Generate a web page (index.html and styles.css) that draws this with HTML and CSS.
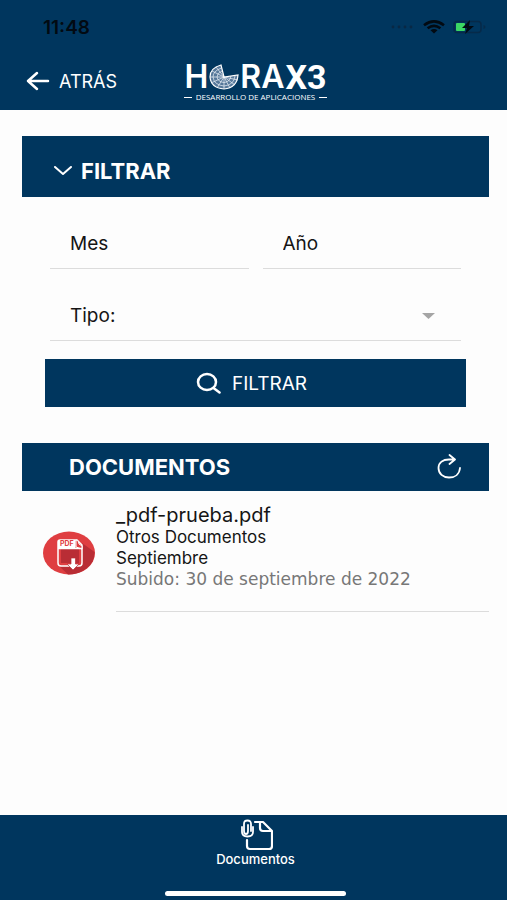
FILE: index.html
```html
<!DOCTYPE html>
<html lang="es">
<head>
<meta charset="utf-8">
<meta name="viewport" content="width=device-width, initial-scale=1">
<title>Documentos</title>
<link rel="stylesheet" href="styles.css">
</head>
<body>
<header class="header">
  <div class="status">
    <time class="clock">11:48</time>
    <div class="indicators">
      <svg width="24" height="4" viewBox="0 0 24 4" fill="#082844" aria-hidden="true"><circle cx="2" cy="2" r="1.4"/><circle cx="8" cy="2" r="1.4"/><circle cx="14" cy="2" r="1.4"/><circle cx="20" cy="2" r="1.4"/></svg>
      <svg width="22" height="14" viewBox="0 0 22 14" fill="none" stroke="#020a12" stroke-width="2.6" aria-hidden="true"><path d="M1 5.200Q11-2.500 21 5.200M4.600 8.300Q11 3.400 17.400 8.300"/><path d="M7.500 10.300Q11 7.700 14.500 10.300L11 13.500Z" fill="#020a12" stroke="none"/></svg>
      <svg width="34" height="14" viewBox="0 0 34 14" aria-hidden="true"><rect x="1" y="1.500" width="27" height="11" rx="3" fill="none" stroke="#062a49" stroke-width="1.500"/><path d="M30.500 5v4q2-.5 2-2t-2-2" fill="#062a49"/><rect x="3" y="3" width="9" height="8" rx="1" fill="#3bd764"/><path d="M17 0 9 8h5L12 14 21 6h-5z" fill="#020a12"/></svg>
    </div>
  </div>
  <div class="navbar">
    <a class="back" href="#">
      <svg width="24" height="20" viewBox="0 0 24 20" fill="none" stroke="#fff" stroke-width="2.500" stroke-linecap="round" stroke-linejoin="round" aria-hidden="true"><path d="M11 2 2 10l9 8M2 10h20"/></svg>
      <span>ATRÁS</span>
    </a>
    <div class="brand">
      <div class="brand-name">
        <span>H</span>
        <svg width="30" height="26" viewBox="0 0 30 26" aria-hidden="true">
          <path d="M15 13 12 1Q1 4 1 13 2 24 15 25 28 24 29 11Z" fill="#56789a"/>
          <g fill="none" stroke="#eef4f9" stroke-width=".7"><path d="M15 13H1M15 13v12M15 13 3 7M15 13 7 3M15 13 2 19M15 13 8 24M15 13l6 11M15 13l11 8M15 13l14 3M12.500 4Q4 7 4 13 5 21 15 22 25 21 26 12M13 7Q8 9 8 13 9 18 15 18.500 21 18 22 12"/></g>
          <path d="M15 13 12 1Q1 4 1 13 2 24 15 25 28 24 29 11Z" fill="none" stroke="#fff" stroke-width="1.200"/>
        </svg>
        <span>RA</span><strong>X3</strong>
      </div>
      <div class="tagline">DESARROLLO DE APLICACIONES</div>
    </div>
  </div>
</header>

<main class="content">
  <section>
    <h2 class="bar bar-filter">
      <button class="toggle" type="button" aria-expanded="true" aria-controls="filters">
        <svg width="18" height="10" viewBox="0 0 18 10" fill="none" stroke="#fff" stroke-width="2" stroke-linecap="round" stroke-linejoin="round" aria-hidden="true"><path d="m1 1 8 7 8-7"/></svg>
        <span>FILTRAR</span>
      </button>
    </h2>
    <form class="filters" id="filters">
      <div class="fields">
        <input class="field" type="text" aria-label="Mes" placeholder="Mes">
        <input class="field" type="text" aria-label="Año" placeholder="Año">
        <div class="field field-type">
          <label for="type">Tipo:</label>
          <select id="type"><option></option></select>
          <svg width="13" height="6" viewBox="0 0 13 6" fill="#a5a5a5" aria-hidden="true"><path d="M0 0h13L6.500 6z"/></svg>
        </div>
      </div>
      <button class="submit" type="submit">
        <svg width="26" height="22" viewBox="0 0 26 22" fill="none" stroke="#fff" stroke-width="2.500" stroke-linecap="round" aria-hidden="true"><ellipse cx="11" cy="10" rx="9" ry="8"/><path d="m17.500 16 6 4.500"/></svg>
        <span>FILTRAR</span>
      </button>
    </form>
  </section>

  <section>
    <div class="bar bar-documents">
      <h2>DOCUMENTOS</h2>
      <button class="refresh" type="button" aria-label="Actualizar">
        <svg width="26" height="26" viewBox="0 0 26 26" fill="none" stroke="#fff" stroke-width="1.800" stroke-linecap="round" stroke-linejoin="round" aria-hidden="true"><path d="M24 14C23.500 20 19 23.500 13 23.500 7 23.500 2.500 19.500 2.500 14S7 5.500 13 5.500h5.500M13.500 1l5.500 4.500-5.500 4.500"/></svg>
      </button>
    </div>
    <ul class="list">
      <li class="document">
        <svg class="pdf" width="54" height="44" viewBox="0 0 54 44" role="img" aria-label="PDF">
          <ellipse cx="27" cy="22" rx="26" ry="21.500" fill="#df3e41"/>
          <path d="m40 12 12.500 9Q53 32 43 38.500 36 43.500 26 43.500L17 35 39 34z" fill="#b92d35"/>
          <path d="M18 9h17l5 5v18q0 3-3 3H19q-3 0-3-3V11q0-2 2-2" fill="#df3e41" stroke="#fff" stroke-width="1.500"/>
          <path d="M19 18h18v14H19z" fill="#b92d35"/>
          <path d="M16 9h17.500v8H16z" fill="#fff"/>
          <path d="M34 9q3 0 3 4l3 2v3l-6-2z" fill="#df3e41" stroke="#fff"/>
          <path d="M16 17.500h24" stroke="#fff" stroke-width="1.500"/>
          <text class="pdf-text" x="18" y="15">PDF</text>
          <path d="M29 27h4.500v6H37l-6 6-6-6h4z" fill="#fff" stroke="#b92d35" stroke-width=".7"/>
        </svg>
        <div class="details">
          <h3>_pdf-prueba.pdf</h3>
          <p>Otros Documentos</p>
          <p>Septiembre</p>
          <p class="date">Subido: 30 de septiembre de 2022</p>
        </div>
      </li>
    </ul>
  </section>
</main>

<footer class="footer">
  <nav>
    <a class="tab" href="#" aria-current="page">
      <svg width="34" height="32" viewBox="0 0 34 32" fill="none" stroke="#fff" stroke-linecap="round" stroke-linejoin="round" aria-hidden="true"><path d="M16 3h8l9 9v15q0 3-3 3H11q-3 0-3-3v-6M21 4v5q0 3 3 3h8" stroke-width="2.200"/><path d="M14 8v5q0 4.500-5.500 4.500T3 13V8M12 12V5q0-3.500-3.500-3.500T5 5v7q0 3 2 3t2-3V6" stroke-width="1.800"/></svg>
      <span>Documentos</span>
    </a>
  </nav>
  <div class="home-bar"></div>
</footer>
</body>
</html>
```

FILE: styles.css
```css
* { box-sizing: border-box; }

body {
  margin: 0;
  min-height: 100vh;
  display: flex;
  flex-direction: column;
  background: #fdfdfd;
  color: #151515;
  font-family: Inter, "Liberation Sans", sans-serif;
  font-size: 19px;
}

h2, h3, p, ul { margin: 0; padding: 0; }
button, input, select { font: inherit; color: inherit; border: 0; border-radius: 0; background: none; padding: 0; }
svg { display: block; flex: none; }
a { color: inherit; text-decoration: none; }

.header, .footer, .bar, .submit { background: #00365e; color: #fff; }

.header { height: 110px; }

.status {
  height: 52px;
  padding: 2px 20px 0 43px;
  display: flex;
  align-items: center;
  justify-content: space-between;
}

.clock { color: #020a12; font-size: 19px; font-weight: 600; }
.indicators { display: flex; align-items: center; gap: 8px; }

.navbar {
  height: 58px;
  padding: 0 26px;
  display: grid;
  grid-template-columns: 1fr auto 1fr;
  align-items: center;
}

.back { display: flex; align-items: center; gap: 9px; font-size: 18px; }

.brand { padding: 2px 0 0 4px; }

.brand-name {
  display: flex;
  align-items: center;
  justify-content: center;
  gap: 1px;
  font: 600 32px/30px Inter, sans-serif;
}

.brand-name strong { font: 700 34px/30px Roboto, sans-serif; }

.tagline {
  display: flex;
  align-items: center;
  justify-content: center;
  gap: 4px;
  font: 8px/10px "Open Sans", sans-serif;
}

.tagline::before, .tagline::after {
  content: "";
  width: 8px;
  height: 1px;
  background: #fff;
}

.content { flex: 1; padding: 26px 18px 24px 22px; }

.bar {
  display: flex;
  align-items: center;
  font-size: 22px;
  font-weight: 700;
}

.bar h2 { font: inherit; }
.bar-filter { height: 61px; padding: 8px 32px 0; }
.toggle { display: flex; align-items: center; gap: 9px; }

.filters { padding: 11px 23px 36px; }

.fields {
  display: grid;
  grid-template-columns: 1fr 1fr;
  column-gap: 14px;
  padding: 0 5px;
}

.field {
  height: 61px;
  min-width: 0;
  width: 100%;
  padding: 10px 21px 0 20px;
  border-bottom: 1px solid #dcdcdc;
}

.field::placeholder { color: #151515; opacity: 1; }

.field-type {
  grid-column: 1 / -1;
  height: 72px;
  padding: 22px 26px 0 20px;
  display: flex;
  align-items: center;
}

.field-type select { flex: 1; appearance: none; }

.submit {
  width: 100%;
  height: 48px;
  margin-top: 18px;
  padding-right: 8px;
  display: flex;
  align-items: center;
  justify-content: center;
  gap: 10px;
}

.bar-documents { height: 48px; padding: 0 27px 0 47px; justify-content: space-between; }

.list { list-style: none; }
.document { display: flex; gap: 20px; padding: 12px 0 0 20px; }
.pdf { margin-top: 28px; }
.pdf-text { font: 700 7px Inter, sans-serif; fill: #df3e41; }

.details {
  flex: 1;
  padding-bottom: 21px;
  border-bottom: 1px solid #dcdcdc;
  font-size: 17px;
  line-height: 21px;
}

.details h3 { font-size: 20px; font-weight: 400; line-height: 24px; }
.details .date { color: #777; font-family: "DejaVu Sans", sans-serif; }

.footer { height: 85px; display: flex; flex-direction: column; justify-content: space-between; align-items: center; padding-left: 4px; }
.tab { display: flex; flex-direction: column; align-items: center; padding-top: 4px; font-size: 13px; font-weight: 500; line-height: 17px; }
.home-bar { width: 36%; height: 5px; margin-bottom: 4px; border-radius: 3px; background: #fff; }
```
